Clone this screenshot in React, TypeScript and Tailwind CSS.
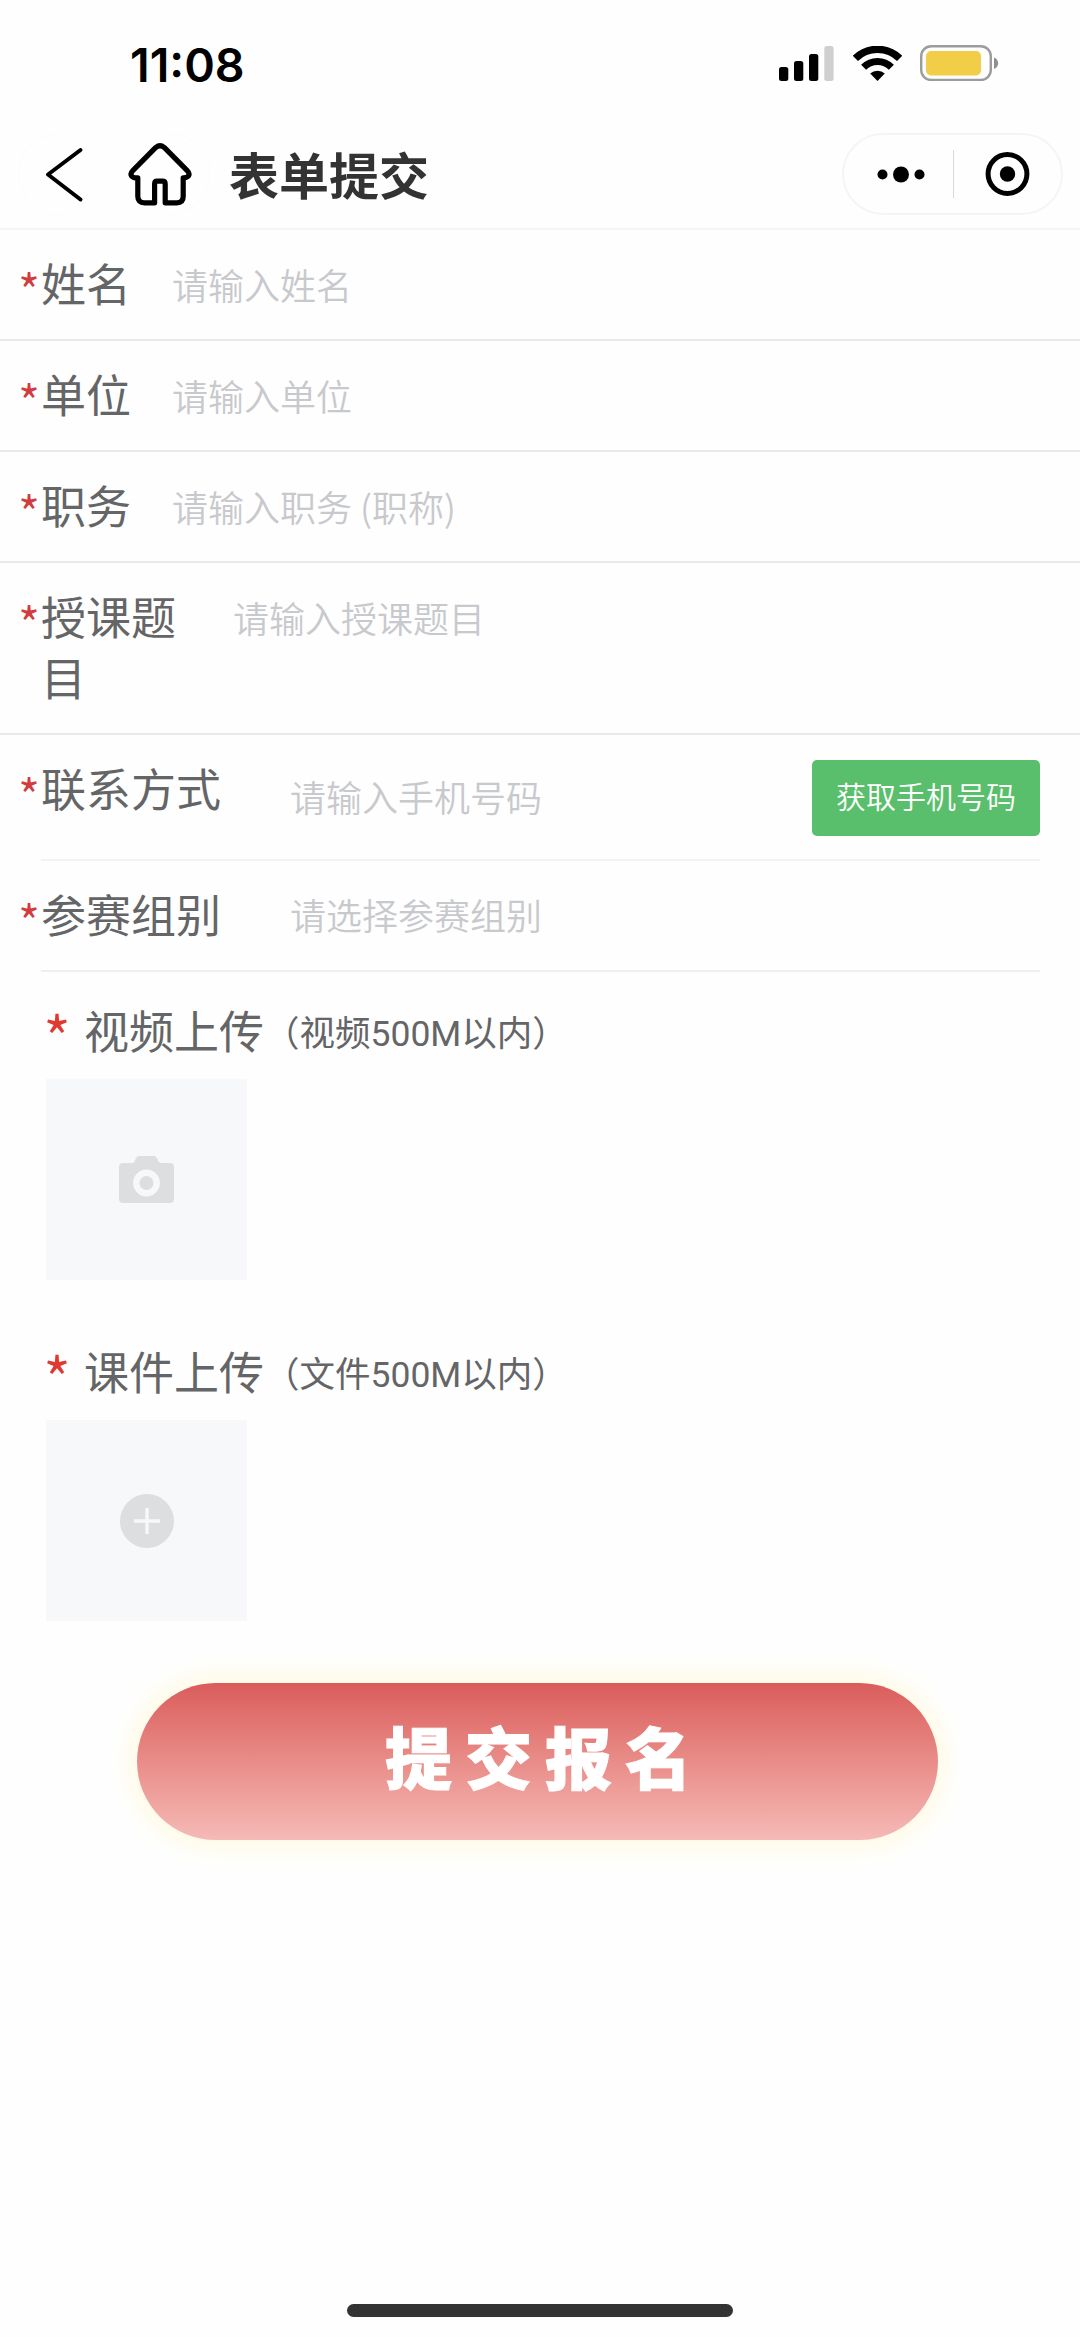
import type { ReactNode } from 'react'

const fields = [
  { label: '姓名', placeholder: '请输入姓名', labelWidth: 'w-[132px]' },
  { label: '单位', placeholder: '请输入单位', labelWidth: 'w-[132px]' },
  { label: '职务', placeholder: '请输入职务 (职称)', labelWidth: 'w-[132px]' },
  { label: '授课题目', placeholder: '请输入授课题目', labelWidth: 'w-[193px]' },
]

function StatusBar() {
  return (
    <div className="flex h-[130px] items-start justify-between pl-[130px] pr-[81px] pt-[45px]">
      <span className="font-[Inter] text-[46.5px] font-semibold leading-[41px] text-black">11:08</span>
      <div className="flex items-start">
        <svg width="55" height="36" viewBox="0 0 55 36" className="mr-[19px] mt-px">
          <rect x="0" y="21" width="9.3" height="14" rx="2.5" fill="#000" />
          <rect x="15" y="15" width="9.3" height="20" rx="2.5" fill="#000" />
          <rect x="30" y="8" width="9.3" height="27" rx="2.5" fill="#000" />
          <rect x="45.3" y="0" width="9.3" height="35" rx="2.5" fill="#cfcfcf" />
        </svg>
        <svg width="49" height="36" viewBox="0 0 49 36" className="mr-[18px] mt-px">
          <path d="M2.4 12.4 A31.5 31.5 0 0 1 46.6 12.4" fill="none" stroke="#000" strokeWidth="7.4" />
          <path d="M10.6 21.2 A19.5 19.5 0 0 1 38.4 21.2" fill="none" stroke="#000" strokeWidth="7" />
          <path d="M17.2 27.6 A10.5 10.5 0 0 1 31.8 27.6 L24.5 35 Z" fill="#000" />
        </svg>
        <svg width="79" height="36" viewBox="0 0 79 36">
          <rect x="1.2" y="1.2" width="69.6" height="33.8" rx="10" fill="none" stroke="#9c9c9c" strokeWidth="2.4" />
          <rect x="6" y="6" width="55" height="24.5" rx="5" fill="#f2cd48" />
          <path d="M74 12.5 C79.5 14.5 79.5 22 74 24 Z" fill="#8f8f8f" />
        </svg>
      </div>
    </div>
  )
}

function NavBar() {
  return (
    <div className="flex h-[100px] justify-between border-b-2 border-[#f5f5f5] pl-[18px] pr-[17px] pt-[3px]">
      <div className="flex h-[82px] items-center">
        <div className="flex h-[82px] w-[192px] items-center rounded-full border border-[#fcfcfc]">
          <svg width="92" height="82" viewBox="0 0 92 82" fill="none" stroke="#000" strokeWidth="4" strokeLinecap="round" strokeLinejoin="round">
            <path d="M61.5 17 L29 41.5 L61.5 66.5" />
          </svg>
          <svg width="64" height="64" viewBox="0 0 64 64" className="ml-[17px]" fill="none" stroke="#000" strokeWidth="5.2" strokeLinejoin="round">
            <path d="M27.8 5.4 Q32 2 36.2 5.4 L59.2 28.6 Q62 31.4 60.6 33.8 Q59.2 35.8 55.2 35.8 L55.2 54.5 Q55.2 60.8 48.8 60.8 L37.2 60.8 L37.2 42 Q37.2 39.2 34.6 39.2 L29.2 39.2 Q26.6 39.2 26.6 42 L26.6 60.8 L16.4 60.8 Q9.8 60.8 9.8 54.5 L9.8 35.8 L7.6 35.8 Q4.8 35.8 3.4 33.8 Q2 31.4 4.8 28.6 Z" />
          </svg>
        </div>
        <h1 className="mb-[3px] ml-[19px] text-[50px] font-bold leading-[50px] text-[#333]">表单提交</h1>
      </div>
      <div className="flex h-[82px] w-[221px] items-center rounded-full border-2 border-[#f5f5f5]">
        <svg width="217" height="78" viewBox="0 0 217 78">
          <circle cx="38.5" cy="39.5" r="5" fill="#000" />
          <circle cx="57" cy="39.5" r="8" fill="#000" />
          <circle cx="75.5" cy="39.5" r="5" fill="#000" />
          <path d="M109.5 15 V63" stroke="#d9d9d9" strokeWidth="1" />
          <circle cx="163.5" cy="39" r="19.4" fill="none" stroke="#000" strokeWidth="5" />
          <circle cx="163.5" cy="39" r="7.7" fill="#000" />
        </svg>
      </div>
    </div>
  )
}

function Label({ width, children }: { width: string; children: ReactNode }) {
  return (
    <div className={`flex shrink-0 ${width}`}>
      <span className="-ml-[2px] mt-[7px] h-[54px] w-[23px] shrink-0 text-[48px] font-[350] leading-[61px] text-[#d13c40]">*</span>
      <span className="w-[140px] text-[45px] font-normal leading-[61px] text-[#646566]">{children}</span>
    </div>
  )
}

function Placeholder({ children }: { children: ReactNode }) {
  return <span className="text-[36px] font-[350] leading-[63px] text-[#c8c9cc]">{children}</span>
}

function Upload({ title, hint, icon }: { title: string; hint: string; icon: ReactNode }) {
  return (
    <section className="h-[341px] pl-[46px] pt-[27px]">
      <div className="flex h-[80px] items-start">
        <span className="-ml-[3px] mt-[6px] w-[41px] text-[61px] font-[350] leading-[61px] text-[#e03a30]">*</span>
        <span className="text-[45px] font-normal leading-[61px] text-[#646566]">{title}</span>
        <span className="font-[Roboto,'Noto_Sans_CJK_SC',sans-serif] text-[35.5px] font-normal leading-[71px] text-[#646566]">{hint}</span>
      </div>
      <div className="flex size-[201px] items-center justify-center bg-[#f7f8fa]">{icon}</div>
    </section>
  )
}

export default function App() {
  return (
    <div className="flex min-h-[2337px] w-[1080px] flex-col bg-[#fefefe] font-['Noto_Sans_CJK_SC',sans-serif]">
      <StatusBar />
      <NavBar />

      <form>
        {fields.map((f) => (
          <div key={f.label} className="flex border-b-2 border-[#e9e9ea] pb-[26px] pl-[20px] pt-[22px]">
            <Label width={f.labelWidth}>{f.label}</Label>
            <div className="-mb-[4px] ml-[20px] pt-px">
              <Placeholder>{f.placeholder}</Placeholder>
            </div>
          </div>
        ))}

        {/* phone */}
        <div className="pl-[20px] pr-[40px]">
          <div className="flex pt-[22px]">
            <Label width="w-[270px]">
              <span className="whitespace-nowrap">联系方式</span>
            </Label>
            <div className="mt-[3px] flex flex-1 items-center justify-between">
              <div className="pb-[3px]">
                <Placeholder>请输入手机号码</Placeholder>
              </div>
              <button type="button" className="h-[76px] w-[228px] rounded-[5px] bg-[#5abf6c] pb-[6px] text-[30px] font-[350] text-white">
                获取手机号码
              </button>
            </div>
          </div>
          <div className="ml-[21px] mt-[23px] h-[2px] bg-[#f3f3f3]" />
        </div>

        {/* group */}
        <div className="pl-[20px] pr-[40px]">
          <div className="flex h-[109px] pt-[22px]">
            <Label width="w-[270px]">
              <span className="whitespace-nowrap">参赛组别</span>
            </Label>
            <Placeholder>请选择参赛组别</Placeholder>
          </div>
          <div className="ml-[21px] h-[2px] bg-[#efefef]" />
        </div>

        <Upload
          title="视频上传"
          hint="（视频500M以内）"
          icon={
            <svg width="55" height="55" viewBox="0 0 55 55">
              <path d="M4 11 H13 Q15 11 16 8.5 Q17.5 4 20 4 H35 Q37.5 4 39 8.5 Q40 11 42 11 H51 Q55 11 55 15 V47 Q55 51 51 51 H4 Q0 51 0 47 V15 Q0 11 4 11 Z" fill="#dcdee0" />
              <circle cx="27.5" cy="31" r="10.2" fill="none" stroke="#f7f8fa" strokeWidth="6.4" />
            </svg>
          }
        />
        <Upload
          title="课件上传"
          hint="（文件500M以内）"
          icon={
            <svg width="54" height="54" viewBox="0 0 54 54">
              <circle cx="27" cy="27" r="27" fill="#dcdee0" />
              <path d="M27 14 V40 M14 27 H40" stroke="#f7f8fa" strokeWidth="3.4" />
            </svg>
          }
        />

        <button
          type="button"
          className="ml-[137px] mt-[29px] block h-[157px] w-[801px] rounded-full bg-linear-to-b from-[#d95c5b] to-[#f5bab7] pb-[12px] pl-[15px] text-center text-[67px] font-black tracking-[13px] text-white shadow-[0_0_24px_8px_#fffae3] [-webkit-text-stroke:1px_white]"
        >
          提交报名
        </button>
      </form>

      <div className="mx-auto mb-[20px] mt-auto h-[13px] w-[386px] rounded-full bg-[#333]" />
    </div>
  )
}
